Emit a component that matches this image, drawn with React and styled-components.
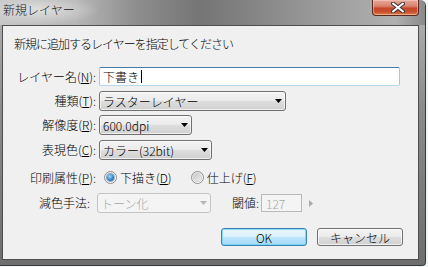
import React from "react";
import styled, { createGlobalStyle } from "styled-components";

const GlobalStyle = createGlobalStyle`
  html, body {
    margin: 0;
    padding: 0;
    background: #f2f5f5;
  }
  body {
    font-family: "Noto Sans CJK JP", "Noto Sans", sans-serif;
    font-size: 12px;
    font-weight: 300;
    color: #000;
  }
  #root {
    width: 428px;
    height: 267px;
    overflow: hidden;
  }
`;

const Window = styled.div`
  box-sizing: border-box;
  width: 426px;
  height: 266px;
  display: flex;
  flex-direction: column;
  border-right: 1px solid #3a3a3a;
  border-bottom: 1px solid #3a3a3a;
  border-radius: 0 6px 4px 0;
  background: linear-gradient(180deg, #b4b4b4 0%, #8c8c8c 40%, #6e6e6e 100%);
`;

const TitleBar = styled.div`
  height: 25px;
  flex: none;
  display: flex;
  justify-content: space-between;
  align-items: flex-start;
  border-radius: 0 6px 0 0;
  background:
    radial-gradient(ellipse 62px 15px at 38px 10px, rgba(225, 225, 225, 0.95), rgba(225, 225, 225, 0) 100%),
    linear-gradient(90deg, #c6c6c6 0%, #b6b6b6 18%, #8e8e8e 32%, #757575 47%, #858585 60%, #9e9e9e 78%, #b0b0b0 93%, #8a8a8a 100%);
`;

const Title = styled.div`
  padding: 2px 0 0 3px;
  line-height: 16px;
  color: #141414;
`;

const Close = styled.div`
  box-sizing: border-box;
  width: 47px;
  height: 16px;
  margin-right: 6px;
  display: flex;
  align-items: center;
  justify-content: center;
  padding-left: 5px;
  border: 1px solid #5a2a20;
  border-top: none;
  border-radius: 0 0 4px 4px;
  background: linear-gradient(180deg, #e6a898 0%, #d98570 40%, #c5472c 55%, #c9502f 80%, #e0894f 100%);
  box-shadow: inset 0 0 0 1px rgba(255, 220, 210, 0.45);
`;

const Client = styled.div`
  box-sizing: border-box;
  width: 417px;
  height: 235px;
  margin-left: 2px;
  padding-top: 10px;
  display: flex;
  flex-direction: column;
  border: 1px solid #4e4e4e;
  background: #f0f0f0;
`;

const Instruction = styled.div`
  padding-left: 11px;
  line-height: 16px;
  letter-spacing: -1px;
`;

const Form = styled.div`
  margin-top: 12px;
  display: flex;
  flex-direction: column;
`;

const Row = styled.div`
  height: ${p => p.$h}px;
  display: flex;
  align-items: center;
`;

const Label = styled.span`
  flex: none;
  width: ${p => p.$w ?? 93}px;
  text-align: right;
  white-space: nowrap;
  line-height: 16px;
`;

const TextBox = styled.div`
  box-sizing: border-box;
  width: 301px;
  height: 19px;
  margin-left: 3px;
  padding-left: 3px;
  display: flex;
  align-items: center;
  background: #fff;
  border: 1px solid #a4c9e3;
  border-top-color: #3d7bad;
  border-bottom-color: #b7d9ed;
  border-radius: 2px;
`;

const Caret = styled.span`
  width: 1px;
  height: 13px;
  margin-left: 2px;
  background: #000;
`;

const Select = styled.div`
  box-sizing: border-box;
  flex: none;
  width: ${p => p.$w}px;
  height: 20px;
  margin-left: ${p => p.$ml ?? 3}px;
  padding: 0 3px 0 3px;
  display: flex;
  align-items: center;
  justify-content: space-between;
  border: 1px solid ${p => (p.$disabled ? "#c2c4c6" : "#707070")};
  border-radius: 3px;
  color: ${p => (p.$disabled ? "#a6a6a6" : "#000")};
  background: ${p =>
    p.$disabled
      ? "#f4f4f4"
      : "linear-gradient(180deg, #f3f3f3 0%, #ebebeb 50%, #dedede 50%, #d0d0d0 100%)"};
  box-shadow: inset 0 0 0 1px ${p => (p.$disabled ? "transparent" : "rgba(255,255,255,0.65)")};
`;

const Arrow = ({ color = "#000" }) => (
  <svg width="7" height="4" viewBox="0 0 7 4">
    <polygon points="0,0 7,0 3.5,4" fill={color} />
  </svg>
);

const RadioGroup = styled.div`
  margin-left: 8px;
  display: flex;
  align-items: center;
`;

const RadioItem = styled.label`
  display: flex;
  align-items: center;
  margin-right: ${p => p.$mr ?? 0}px;
`;

const Radio = styled.span`
  box-sizing: border-box;
  flex: none;
  width: 13px;
  height: 13px;
  margin-right: 3px;
  display: grid;
  place-items: center;
  border-radius: 50%;
  border: 1px solid #8e8f8f;
  background: linear-gradient(135deg, #e6e6e6, #ffffff);

  &::after {
    content: "";
    width: 7px;
    height: 7px;
    border-radius: 50%;
    background: ${p =>
      p.$checked
        ? "radial-gradient(circle at 40% 35%, #a6dcf8 0%, #3d8ad0 50%, #1a4f8e 100%)"
        : "linear-gradient(135deg, #c9c9c9 0%, #ececec 100%)"};
    box-shadow: 0 0 0 1px ${p => (p.$checked ? "rgba(40,90,150,0.5)" : "rgba(170,170,170,0.5)")};
  }
`;

const SmallLabel = styled.span`
  flex: none;
  width: 30px;
  margin-left: 18px;
  text-align: right;
  line-height: 16px;
`;

const NumBox = styled.div`
  box-sizing: border-box;
  width: 41px;
  height: 18px;
  margin-left: 2px;
  padding-left: 4px;
  display: flex;
  align-items: center;
  color: #a6a6a6;
  background: #f4f4f4;
  border: 1px solid #b9b9b9;
`;

const Spin = styled.svg`
  margin-left: 7px;
`;

const Buttons = styled.div`
  margin-top: 14px;
  padding-right: 15px;
  display: flex;
  justify-content: flex-end;
  gap: 10px;
`;

const Button = styled.div`
  box-sizing: border-box;
  width: 86px;
  height: 18px;
  display: flex;
  align-items: center;
  justify-content: center;
  border: 1px solid ${p => (p.$primary ? "#3c7fb1" : "#707070")};
  border-radius: 3px;
  background: ${p =>
    p.$primary
      ? "linear-gradient(180deg, #eaf6fd 0%, #d9f0fc 50%, #bee6fd 50%, #a7d9f5 100%)"
      : "linear-gradient(180deg, #f3f3f3 0%, #ebebeb 50%, #dedede 50%, #d0d0d0 100%)"};
  box-shadow: inset 0 0 0 1px ${p => (p.$primary ? "rgba(100, 210, 245, 0.7)" : "rgba(255,255,255,0.7)")};
`;

export default function App() {
  return (
    <>
      <GlobalStyle />
      <Window>
        <TitleBar>
          <Title>新規レイヤー</Title>
          <Close>
            <svg width="14" height="11" viewBox="0 0 14 11">
              <path d="M2 1.5 L12 9.5 M12 1.5 L2 9.5" stroke="#3b3b3b" strokeWidth="4" strokeLinecap="round" />
              <path d="M2 1.5 L12 9.5 M12 1.5 L2 9.5" stroke="#fff" strokeWidth="2" strokeLinecap="round" />
            </svg>
          </Close>
        </TitleBar>
        <Client>
          <Instruction>新規に追加するレイヤーを指定してください</Instruction>
          <Form>
            <Row $h={25}>
              <Label>レイヤー名(<u>N</u>):</Label>
              <TextBox>
                下書き<Caret />
              </TextBox>
            </Row>
            <Row $h={24}>
              <Label>種類(<u>T</u>):</Label>
              <Select $w={187}>
                ラスターレイヤー
                <Arrow />
              </Select>
            </Row>
            <Row $h={24}>
              <Label>解像度(<u>R</u>):</Label>
              <Select $w={93}>
                600.0dpi
                <Arrow />
              </Select>
            </Row>
            <Row $h={26}>
              <Label>表現色(<u>C</u>):</Label>
              <Select $w={113}>
                カラー(32bit)
                <Arrow />
              </Select>
            </Row>
            <Row $h={29}>
              <Label>印刷属性(<u>P</u>):</Label>
              <RadioGroup>
                <RadioItem $mr={19}>
                  <Radio $checked />
                  下描き(<u>D</u>)
                </RadioItem>
                <RadioItem>
                  <Radio />
                  仕上げ(<u>F</u>)
                </RadioItem>
              </RadioGroup>
            </Row>
            <Row $h={22}>
              <Label $w={87}>減色手法:</Label>
              <Select $w={114} $ml={7} $disabled>
                トーン化
                <Arrow color="#b5b5b5" />
              </Select>
              <SmallLabel>閾値:</SmallLabel>
              <NumBox>127</NumBox>
              <Spin width="4" height="7" viewBox="0 0 4 7">
                <polygon points="0,0 4,3.5 0,7" fill="#a9a9a9" />
              </Spin>
            </Row>
          </Form>
          <Buttons>
            <Button $primary>OK</Button>
            <Button>キャンセル</Button>
          </Buttons>
        </Client>
      </Window>
    </>
  );
}
